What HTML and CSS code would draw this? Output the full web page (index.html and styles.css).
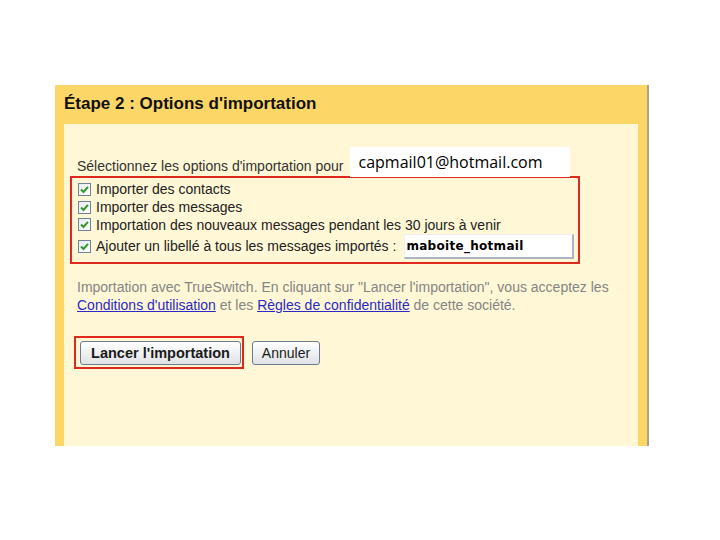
FILE: index.html
```html
<!DOCTYPE html>
<html lang="fr">
<head>
<meta charset="utf-8">
<link rel="stylesheet" href="styles.css">
</head>
<body>
<div class="page">
  <div class="panel">
    <div class="panel-title">Étape 2 : Options d'importation</div>
    <div class="panel-body">
      <div class="intro-row">
        <span class="intro-label">Sélectionnez les options d'importation pour</span>
        <span class="email-box">capmail01@hotmail.com</span>
      </div>
      <div class="options-box">
        <div class="opt-row r1"><span class="cb"><svg viewBox="0 0 13 13" width="13" height="13"><path d="M3 6.5 L5.5 9 L10 3.8" fill="none" stroke="#2f9a2a" stroke-width="2"/></svg></span><span class="opt-label">Importer des contacts</span></div>
        <div class="opt-row r2"><span class="cb"><svg viewBox="0 0 13 13" width="13" height="13"><path d="M3 6.5 L5.5 9 L10 3.8" fill="none" stroke="#2f9a2a" stroke-width="2"/></svg></span><span class="opt-label">Importer des messages</span></div>
        <div class="opt-row r3"><span class="cb"><svg viewBox="0 0 13 13" width="13" height="13"><path d="M3 6.5 L5.5 9 L10 3.8" fill="none" stroke="#2f9a2a" stroke-width="2"/></svg></span><span class="opt-label">Importation des nouveaux messages pendant les 30 jours à venir</span></div>
        <div class="opt-row r4"><span class="cb"><svg viewBox="0 0 13 13" width="13" height="13"><path d="M3 6.5 L5.5 9 L10 3.8" fill="none" stroke="#2f9a2a" stroke-width="2"/></svg></span><span class="opt-label">Ajouter un libellé à tous les messages importés :</span><span class="label-input">maboite_hotmail</span></div>
      </div>
      <p class="terms">Importation avec TrueSwitch. En cliquant sur "Lancer l'importation", vous acceptez les<br><a class="lnk">Conditions d'utilisation</a> et les <a class="lnk">Règles de confidentialité</a> de cette société.</p>
      <div class="btn-row">
        <span class="btn-mark"><span class="btn btn-main">Lancer l'importation</span></span>
        <span class="btn btn-cancel">Annuler</span>
      </div>
    </div>
  </div>
</div>
</body>
</html>
```
FILE: styles.css
```css
html, body {
  margin: 0;
  padding: 0;
  background: #ffffff;
}
body {
  font-family: "Liberation Sans", Arial, sans-serif;
  width: 720px;
  height: 540px;
  overflow: hidden;
}
.page {
  padding: 85px 0 0 55px;
}
.panel {
  width: 592px;
  height: 361px;
  background: #fdd668;
  box-shadow: 2px 0 0 #aca38e;
  display: flex;
  flex-direction: column;
}
.panel-title {
  height: 39px;
  box-sizing: border-box;
  padding: 8px 0 0 9px;
  font-size: 17px;
  font-weight: bold;
  color: #111;
  line-height: 22px;
}
.panel-body {
  flex: 1;
  margin: 0 9px;
  background: #fff7d6;
  padding-top: 23px;
}
.intro-row {
  display: flex;
  align-items: flex-end;
  height: 30px;
  padding-left: 13px;
  position: relative;
  z-index: 1;
}
.intro-label {
  font-size: 14px;
  color: #333;
  line-height: 16px;
  padding-bottom: 3px;
  white-space: nowrap;
}
.email-box {
  width: 220px;
  height: 30px;
  box-sizing: border-box;
  margin-left: 6px;
  background: #fff;
  padding: 4px 0 0 9px;
  font-family: "Open Sans", "DejaVu Sans", sans-serif;
  font-size: 16px;
  line-height: 22px;
  color: #000;
}
.options-box {
  margin: -1px 0 0 6px;
  width: 510px;
  height: 88px;
  box-sizing: border-box;
  border: 2px solid #e0281c;
  padding: 2px 0 0 6px;
}
.opt-row {
  display: flex;
  align-items: center;
  height: 18px;
}
.opt-row.r3 { height: 17px; }
.opt-row.r4 { height: 26px; }
.cb {
  width: 13px;
  height: 13px;
  box-sizing: border-box;
  border: 1px solid #6f8296;
  background: linear-gradient(135deg, #e8ecf0, #ffffff);
  display: flex;
  flex-shrink: 0;
}
.cb svg {
  margin: -1px;
}
.opt-label {
  margin-left: 5px;
  font-size: 14px;
  color: #222;
  line-height: 16px;
  white-space: nowrap;
}
.label-input {
  margin-left: 8px;
  width: 170px;
  height: 25px;
  box-sizing: border-box;
  background: #fff;
  border-top: 1px solid #eef0f2;
  border-left: 1px solid #eef0f2;
  border-right: 2px solid #a9b6c6;
  border-bottom: 2px solid #a9b6c6;
  padding: 1px 0 0 1px;
  font-family: "DejaVu Sans", sans-serif;
  font-size: 12px;
  font-weight: bold;
  letter-spacing: 0.3px;
  line-height: 20px;
  color: #000;
}
.terms {
  margin: 14px 0 0 13px;
  font-size: 14px;
  line-height: 18px;
  color: #858585;
  white-space: nowrap;
}
.lnk {
  color: #2b2bc4;
  text-decoration: underline;
}
.btn-row {
  display: flex;
  align-items: center;
  margin: 22px 0 0 10px;
}
.btn-mark {
  border: 2px solid #e0281c;
  padding: 3px 1px 2px 4px;
  display: flex;
}
.btn {
  height: 24px;
  box-sizing: border-box;
  border: 1px solid #6c7c8c;
  border-radius: 3px;
  background: linear-gradient(#ffffff, #dfe2e6);
  color: #1a1a1a;
  display: flex;
  align-items: center;
  justify-content: center;
  line-height: 16px;
}
.btn-main {
  width: 161px;
  font-size: 14.5px;
  font-weight: bold;
}
.btn-cancel {
  width: 68px;
  margin-left: 8px;
  font-size: 14px;
}
```
